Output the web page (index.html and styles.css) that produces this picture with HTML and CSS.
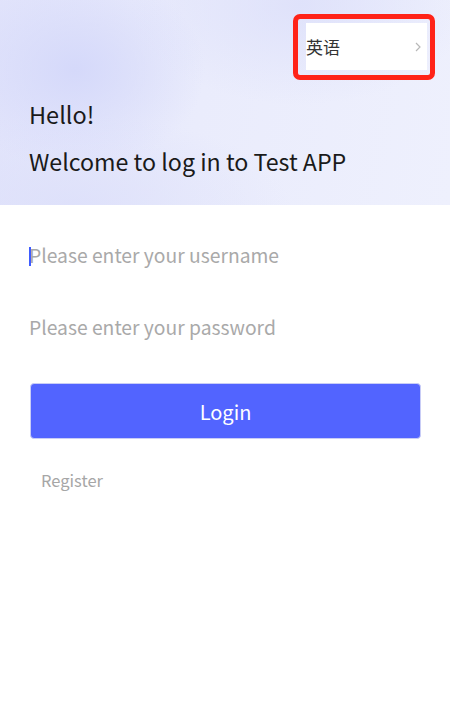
FILE: index.html
```html
<!DOCTYPE html>
<html lang="zh">
<head>
<meta charset="utf-8">
<title>Login</title>
<link rel="stylesheet" href="styles.css">
</head>
<body>
<div class="page">
  <header class="hero">
    <div class="lang-row">
      <div class="lang-outline">
        <div class="lang-box">
          <span class="lang-text">英语</span>
          <svg class="chev" width="8" height="12" viewBox="0 0 8 12"><path d="M2 2 L6 6 L2 10" fill="none" stroke="#b8b8b8" stroke-width="1.2"/></svg>
        </div>
      </div>
    </div>
    <h1 class="hello">Hello!</h1>
    <p class="welcome">Welcome to log in to Test APP</p>
  </header>
  <main class="form">
    <div class="field"><span class="caret"></span><span class="ph">Please enter your username</span></div>
    <div class="field pw"><span class="ph">Please enter your password</span></div>
    <button class="login">Login</button>
    <div class="register">Register</div>
  </main>
</div>
</body>
</html>
```
FILE: styles.css
```css
* { box-sizing: border-box; }
html, body { margin: 0; padding: 0; background: #fff; }
body { font-family: "Noto Sans CJK SC", "Noto Sans", sans-serif; width: 450px; height: 714px; overflow: hidden; }
.page { display: flex; flex-direction: column; }
.hero {
  height: 205px;
  padding: 14px 15px 0 29px;
  background:
    radial-gradient(ellipse 130px 100px at 75px 70px, rgba(212,216,250,0.95), rgba(212,216,250,0) 100%),
    radial-gradient(ellipse 170px 100px at 300px 5px, rgba(220,223,250,0.8), rgba(220,223,250,0) 100%),
    radial-gradient(ellipse 220px 90px at 70px 205px, rgba(220,223,250,0.8), rgba(220,223,250,0) 100%),
    linear-gradient(100deg, #e2e4fb 0%, #eaecfc 45%, #eef0fd 100%);
}
.lang-row { display: flex; justify-content: flex-end; height: 66px; }
.lang-outline {
  width: 142px; height: 66px;
  border: 5px solid #ff2318;
  border-radius: 7px;
  padding: 4px 3px 5px 8px;
}
.lang-box {
  background: #fff;
  height: 100%;
  display: flex; align-items: center; justify-content: space-between;
  padding: 0 5px 0 0;
}
.lang-text { font-size: 17px; color: #333; line-height: 1; }
.chev { display: block; }
.hello { margin: 18px 0 0; font-size: 23.5px; font-weight: 400; color: #1a1a1a; line-height: 32px; }
.welcome { margin: 15px 0 0; font-size: 23.2px; color: #1a1a1a; line-height: 32px; }
.form { padding: 0 29px 0 29px; display: flex; flex-direction: column; }
.field { height: 72px; display: flex; align-items: center; position: relative; margin-top: 15px; }
.field.pw { margin-top: 0; }
.caret { position: absolute; left: 0; top: 27px; width: 2px; height: 19px; background: #3f5cff; }
.ph { font-size: 19.3px; color: #a9a9a9; line-height: 1; }
.login {
  margin: 19px 0 0 1px; width: 391px; height: 56px;
  background: #5264ff; color: #fff;
  border: 1px solid #c9cdf6; border-radius: 4px;
  font-family: inherit; font-size: 20px;
}
.register { margin: 30px 0 0 12px; font-size: 16.5px; color: #a6a6a6; line-height: 22px; }
```
